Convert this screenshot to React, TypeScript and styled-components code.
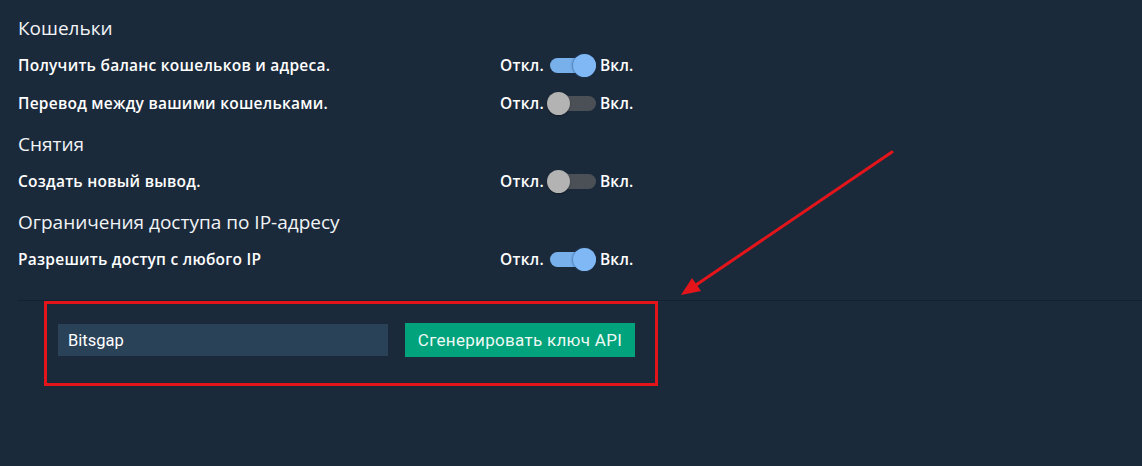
import React, { useState } from 'react'
import styled, { createGlobalStyle } from 'styled-components'

const GlobalStyle = createGlobalStyle`
  html, body {
    margin: 0;
    padding: 0;
    background: #1b2a3b;
    overflow: hidden;
  }
  body {
    font-family: "Open Sans", "Liberation Sans", sans-serif;
    color: #ffffff;
  }
`

const Page = styled.div`
  position: relative;
  width: 1142px;
  height: 466px;
  overflow: hidden;
`

const Content = styled.div`
  display: flex;
  flex-direction: column;
  padding: 6px 0 0 18px;
`

const Heading = styled.div`
  height: 40px;
  padding-top: 4px;
  box-sizing: border-box;
  display: flex;
  align-items: center;
  font-size: 19px;
  font-weight: 400;
  color: #f2f4f6;
`

const Row = styled.div`
  height: 38px;
  display: flex;
  align-items: center;
`

const Label = styled.div`
  width: 482px;
  font-size: 15.5px;
  font-weight: 600;
  letter-spacing: 0.25px;
  color: #ffffff;
`

const SwitchText = styled.span`
  font-size: 15.5px;
  font-weight: 600;
  letter-spacing: 0.25px;
  color: #ffffff;
`

const Track = styled.div<{ $on: boolean }>`
  position: relative;
  width: 46px;
  height: 15px;
  margin: 0 4px 0 6px;
  border-radius: 8px;
  background: ${p => (p.$on ? '#78b0ec' : '#4a5056')};
  cursor: pointer;
`

const Thumb = styled.div<{ $on: boolean }>`
  position: absolute;
  top: 50%;
  left: ${p => (p.$on ? '23px' : '-3px')};
  width: 23px;
  height: 23px;
  margin-top: -11.5px;
  border-radius: 50%;
  background: ${p => (p.$on ? '#7fb8f4' : '#b3b3b3')};
  box-shadow: ${p => (p.$on ? '-1px 0 2px rgba(40, 80, 130, 0.55)' : '0 1px 2px rgba(0, 0, 0, 0.35)')};
`

const Divider = styled.div`
  height: 1px;
  margin: 22px 0 0 18px;
  background: #142230;
`

const Highlight = styled.div`
  width: 614px;
  height: 85px;
  box-sizing: border-box;
  margin: 0 0 0 44px;
  border: 3px solid #e3151b;
  display: flex;
  align-items: flex-start;
  padding: 19px 0 0 11px;
  gap: 17px;
`

const NameInput = styled.input`
  width: 330px;
  height: 32px;
  box-sizing: border-box;
  border: none;
  outline: none;
  background: #2a4258;
  color: #ffffff;
  font-family: Roboto, "Liberation Sans", sans-serif;
  font-size: 16.5px;
  font-weight: 400;
  padding: 0 10px;
  margin-top: 1px;
`

const GenerateButton = styled.button`
  width: 230px;
  height: 34px;
  padding: 0;
  border: none;
  background: #00a37b;
  color: #eef8f4;
  font-family: Roboto, "Liberation Sans", sans-serif;
  font-size: 17px;
  font-weight: 400;
  letter-spacing: 0.3px;
  cursor: pointer;
`

const Arrow = styled.svg`
  position: absolute;
  left: 0;
  top: 0;
  pointer-events: none;
`

interface ToggleRowProps {
  label: string
  initial: boolean
}

const ToggleRow: React.FC<ToggleRowProps> = ({ label, initial }) => {
  const [on, setOn] = useState(initial)
  return (
    <Row>
      <Label>{label}</Label>
      <SwitchText>Откл.</SwitchText>
      <Track $on={on} onClick={() => setOn(!on)}>
        <Thumb $on={on} />
      </Track>
      <SwitchText>Вкл.</SwitchText>
    </Row>
  )
}

export default function App() {
  const [name, setName] = useState('Bitsgap')
  return (
    <Page>
      <GlobalStyle />
      <Content>
        <Heading>Кошельки</Heading>
        <ToggleRow label="Получить баланс кошельков и адреса." initial={true} />
        <ToggleRow label="Перевод между вашими кошельками." initial={false} />
        <Heading>Снятия</Heading>
        <ToggleRow label="Создать новый вывод." initial={false} />
        <Heading>Ограничения доступа по IP-адресу</Heading>
        <ToggleRow label="Разрешить доступ с любого IP" initial={true} />
      </Content>
      <Divider />
      <Highlight>
        <NameInput value={name} onChange={e => setName(e.target.value)} />
        <GenerateButton>Сгенерировать ключ API</GenerateButton>
      </Highlight>
      <Arrow width="1142" height="466">
        <line x1="892" y1="152" x2="696" y2="285" stroke="#e3151b" strokeWidth="3" strokeLinecap="round" />
        <polygon points="681,295 692,278 701,291" fill="#e3151b" />
      </Arrow>
    </Page>
  )
}
